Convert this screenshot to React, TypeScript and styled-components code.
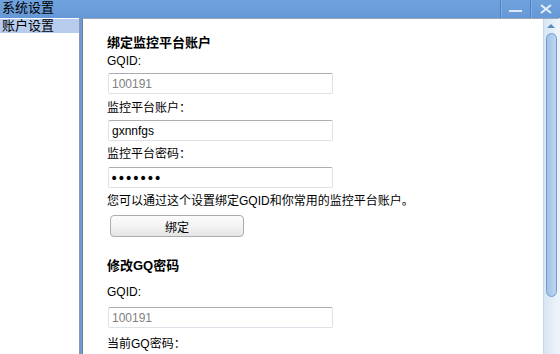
import React from 'react';
import styled, { createGlobalStyle } from 'styled-components';

const GlobalStyle = createGlobalStyle`
  html, body { margin: 0; padding: 0; }
  body {
    width: 560px; height: 354px; overflow: hidden;
    background: #6a9cd9;
    font-family: "Liberation Sans", "Noto Sans CJK SC", sans-serif;
    font-size: 12px; color: #000;
  }
`;

const Window = styled.div`
  width: 560px; height: 354px;
  display: flex; flex-direction: column;
  background: #6a9cd9;
  overflow: hidden;
`;

const TitleBar = styled.div`
  height: 18px; flex: none;
  display: flex; align-items: stretch;
  background: linear-gradient(#70a2dd, #6598d6);
`;

const Title = styled.div`
  flex: 1;
  padding-left: 2px;
  font-size: 13px; line-height: 15px;
  color: #000;
`;

const WinButton = styled.div<{ $align?: string }>`
  width: 29px;
  border-left: 1px solid #4f80c0;
  box-shadow: inset 1px 0 0 #82ade0;
  display: flex; justify-content: center;
  align-items: ${p => p.$align || 'center'};
`;

const MinBar = styled.div`
  width: 13px; height: 2px; margin-bottom: 6px;
  background: #dce8f6;
`;

const Body = styled.div`
  flex: 1; min-height: 0;
  display: flex; gap: 2px;
`;

const Sidebar = styled.div`
  width: 79px; flex: none;
  background: #fff;
  border-right: 1px solid #8a98ad;
  padding-top: 1px;
`;

const NavItem = styled.div<{ $active?: boolean }>`
  height: 14px; line-height: 14px;
  padding-left: 2px;
  font-size: 13px;
  background: ${p => (p.$active ? '#b8cdee' : 'transparent')};
`;

const Panel = styled.div`
  flex: 1; min-width: 0;
  display: flex;
  background: #fff;
  border-left: 1px solid #767f8c;
  border-top: 1px solid #9aa6b6;
  border-right: 2px solid #eef3f9;
`;

const Content = styled.div`
  flex: 1; min-width: 0;
  padding: 16px 0 0 24px;
  overflow: hidden;
`;

const Heading = styled.div<{ $top: number }>`
  margin-top: ${p => p.$top}px;
  font-size: 13px; font-weight: bold; line-height: 16px;
`;

const Label = styled.div<{ $top: number }>`
  margin-top: ${p => p.$top}px;
  line-height: 16px;
`;

const TextInput = styled.input<{ $top: number; $muted?: boolean }>`
  display: block; box-sizing: border-box;
  margin: ${p => p.$top}px 0 0 1px;
  width: 225px; height: 21px;
  padding: 0 3px;
  border: 1px solid #dde2e8;
  border-top-color: #abadb3;
  border-radius: 2px;
  background: #fff;
  font-family: "Liberation Sans", "Noto Sans CJK SC", sans-serif;
  font-size: 12px;
  color: ${p => (p.$muted ? '#808080' : '#000')};
  outline: none;
`;

const PasswordInput = styled(TextInput)`
  padding: 0 1px;
  font-family: "DejaVu Sans", sans-serif;
  font-size: 14px;
  letter-spacing: -1px;
`;

const Button = styled.button<{ $top: number }>`
  display: block;
  margin: ${p => p.$top}px 0 0 3px;
  width: 134px; height: 22px;
  padding: 0;
  border: 1px solid #acacac;
  border-radius: 4px;
  background: linear-gradient(#fcfcfc, #f3f3f3 50%, #e4e4e4);
  font-family: "Liberation Sans", "Noto Sans CJK SC", sans-serif;
  font-size: 12px; color: #000;
`;

const ScrollBar = styled.div`
  width: 14px; flex: none;
  display: flex; flex-direction: column; align-items: center;
  background: linear-gradient(90deg, #d7e5f4, #eef4fa);
  border-left: 1px solid #c6d7ea;
`;

const ArrowUp = styled.div`
  margin-top: 5px;
  width: 0; height: 0;
  border-left: 4px solid transparent;
  border-right: 4px solid transparent;
  border-bottom: 4px solid #5d8ac6;
`;

const Thumb = styled.div`
  margin-top: 5px;
  width: 9px; height: 262px;
  border: 1px solid #709cd1;
  border-radius: 6px;
  background: linear-gradient(90deg, #a2c2e6, #bdd6ef);
`;

export default function App() {
  return (
    <>
      <GlobalStyle />
      <Window>
        <TitleBar>
          <Title>系统设置</Title>
          <WinButton $align="flex-end"><MinBar /></WinButton>
          <WinButton>
            <svg width="12" height="10" viewBox="0 0 12 10">
              <path d="M1 1 L11 9 M11 1 L1 9" stroke="#e6eef9" strokeWidth="2" fill="none" />
            </svg>
          </WinButton>
        </TitleBar>
        <Body>
          <Sidebar>
            <NavItem $active>账户设置</NavItem>
          </Sidebar>
          <Panel>
            <Content>
              <Heading $top={0}>绑定监控平台账户</Heading>
              <Label $top={2}>GQID:</Label>
              <TextInput $top={4} $muted readOnly value="100191" />
              <Label $top={6}>监控平台账户：</Label>
              <TextInput $top={4} readOnly value="gxnnfgs" />
              <Label $top={5}>监控平台密码：</Label>
              <PasswordInput $top={5} type="password" readOnly value="1234567" />
              <Label $top={5}>您可以通过这个设置绑定GQID和你常用的监控平台账户。</Label>
              <Button $top={6}>绑定</Button>
              <Heading $top={21}>修改GQ密码</Heading>
              <Label $top={10}>GQID:</Label>
              <TextInput $top={7} $muted readOnly value="100191" />
              <Label $top={8}>当前GQ密码：</Label>
            </Content>
            <ScrollBar>
              <ArrowUp />
              <Thumb />
            </ScrollBar>
          </Panel>
        </Body>
      </Window>
    </>
  );
}
